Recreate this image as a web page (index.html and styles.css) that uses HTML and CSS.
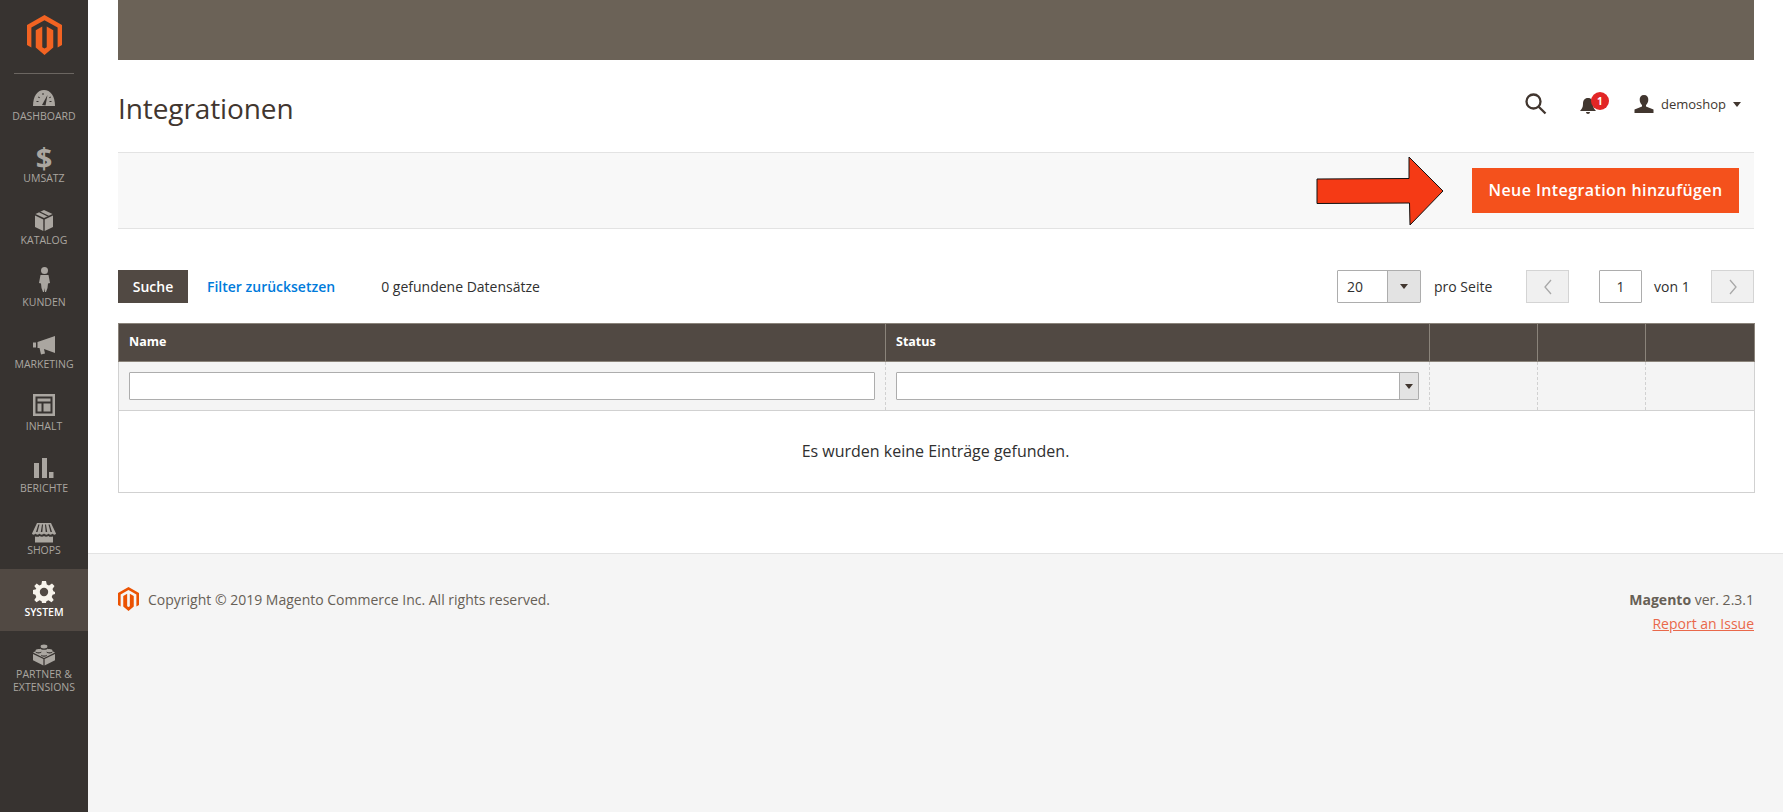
FILE: index.html
```html
<!DOCTYPE html>
<html lang="de">
<head>
<meta charset="utf-8">
<title>Integrationen</title>
<link rel="stylesheet" href="styles.css">
</head>
<body>
<div class="app">
  <nav class="sidebar">
    <div class="logo-wrap">
      <svg class="logo" viewBox="0 0 36 41"><path d="M18 0 36 10.300V30.800L31.500 33.400V12.900L18 5.200 4.500 12.900V33.400L0 30.800V10.300Z"/><path d="M9 15.500 15.700 11.700V33L18 34.300 20.300 33V11.700L27 15.500V33.400L18 41 9 33.400Z"/></svg>
    </div>
    <ul class="menu">
      <li class="item">
        <svg class="ico" viewBox="0 0 26 26"><path d="M2 23C2 13 6.500 7 13 7S24 13 24 23Z"/><path class="cut" d="M11 22 16.500 12 14.500 22.500Z"/><path class="cut" d="M5.500 18h2v1h-2zM7.500 13.500l1.500 1-.6.8-1.500-1zM11.500 10l1 0 0 2-1 0zM19.500 13.500l-1.500 1 .6.8 1.500-1zM18.500 18h2v1h-2z"/></svg>
        <span class="lbl">Dashboard</span>
      </li>
      <li class="item">
        <span class="ico glyph">$</span>
        <span class="lbl">Umsatz</span>
      </li>
      <li class="item">
        <svg class="ico" viewBox="0 0 26 26"><path d="M13 3 21.500 7 13 11 4.500 7Z"/><path d="M4 8.500 12.300 12.500V24L4 20Z"/><path d="M22 8.500 13.700 12.500V24L22 20Z"/><path class="cut" d="M8 5.200 9.200 4.600 17.800 8.800 16.600 9.400Z"/></svg>
        <span class="lbl">Katalog</span>
      </li>
      <li class="item">
        <svg class="ico" viewBox="0 0 26 26"><circle cx="13.500" cy="1.500" r="3.500"/><path d="M9.500 6H17.500L19 14 17 14.500 16.500 19 15 23H14L13.500 19 13 23H12L10.500 19 10 14.500 8 14Z"/></svg>
        <span class="lbl">Kunden</span>
      </li>
      <li class="item">
        <svg class="ico" viewBox="0 0 26 26"><path d="M2 11.500H5V16.500H2Z"/><path d="M6.500 11 24 5V22L13 18 14 22.500 10 23.500 8.500 17H6.500Z"/></svg>
        <span class="lbl">Marketing</span>
      </li>
      <li class="item">
        <svg class="ico" viewBox="0 0 26 26"><path fill-rule="evenodd" d="M2 1H24V23H2ZM4.500 3.500V20.500H21.500V3.500Z"/><path d="M6.500 5.500H19.500V8.500H6.500ZM6.500 10.500H10.500V18.500H6.500ZM12.500 10.500H19.500V18.500H12.500Z"/></svg>
        <span class="lbl">Inhalt</span>
      </li>
      <li class="item">
        <svg class="ico" viewBox="0 0 26 26"><path d="M3 8H8V23H3ZM11 3H16V23H11ZM18 17H22.500V23H18Z"/></svg>
        <span class="lbl">Berichte</span>
      </li>
      <li class="item">
        <svg class="ico" viewBox="0 0 26 26"><path d="M6 6H20L25 16.500C25 18 22 18 21.500 16.500 21 18 18 18 17.500 16.500 17 18 14 18 13 16.500 12 18 9 18 8.500 16.500 8 18 5 18 4.500 16.500 4 18 1 18 1 16.500Z"/><path d="M4 19.500C6 20 8 20 8.500 19 10 20 12 20 13 19 14 20 16 20 17.500 19 18 20 20 20 22 19.500V25.500H4Z"/><path class="cut" d="M7.300 7.500 8.500 7.500 6.500 15H5ZM11 7.500H12L11.300 15H9.800ZM14 7.500H15L16.200 15H14.700ZM17.500 7.500H18.700L21 15H19.500Z"/></svg>
        <span class="lbl">Shops</span>
      </li>
      <li class="item active">
        <svg class="ico" viewBox="0 0 26 26"><path fill-rule="evenodd" d="M11 2H15L15.800 5.600 18 6.500 21 4.500 23.500 7 21.500 10 22.400 12.200 24 13 24 15 21.600 15.800 20.700 18 22.700 21 20.500 23.200 17.500 21.300 15.400 22.200 15 24H11L10.600 22.200 8.500 21.300 5.500 23.200 3.300 21 5.300 18 4.400 15.800 2 15V11L5 10.300 5.300 9.800 3.300 7 5.700 4.500 8.300 6.400 10.400 5.500ZM13 8.800A4.200 4.200 0 1 0 13 17.200 4.200 4.200 0 1 0 13 8.800Z"/></svg>
        <span class="lbl">System</span>
      </li>
      <li class="item">
        <svg class="ico" viewBox="0 0 26 26"><path d="M13 6 24 11.500 13 17 2 11.500Z"/><path d="M2 12.900 12.400 18.100V24.500L2 19.300Z"/><path d="M24 12.900 13.600 18.100V24.500L24 19.300Z"/><ellipse class="cut" cx="13" cy="7.200" rx="3.400" ry="1.500"/><ellipse cx="13" cy="5.500" rx="3.400" ry="1.900"/><ellipse class="cut" cx="7.500" cy="11" rx="3" ry="1.400"/><ellipse cx="7.500" cy="9.700" rx="3" ry="1.600"/><ellipse class="cut" cx="18.500" cy="11" rx="3" ry="1.400"/><ellipse cx="18.500" cy="9.700" rx="3" ry="1.600"/><ellipse class="cut" cx="13" cy="14.300" rx="3" ry="1.400"/><ellipse cx="13" cy="13" rx="3" ry="1.600"/></svg>
        <span class="lbl">Partner &amp; Extensions</span>
      </li>
    </ul>
  </nav>

  <div class="main">
    <div class="content">
      <div class="banner"></div>
      <header class="page-head">
        <h1 class="title">Integrationen</h1>
        <div class="head-tools">
          <svg class="search" viewBox="0 0 22 22"><circle cx="8.500" cy="8.500" r="7"/><path d="M13.700 13.700 20.500 20.500"/></svg>
          <div class="bell-wrap">
            <svg class="bell" viewBox="0 0 18 18"><path d="M9 1C5.500 1 4 3.500 4 7 4 10.500 2.800 12 1 14H17C15.200 12 14 10.500 14 7 14 3.500 12.500 1 9 1Z"/><path d="M7 15H11C11 17.500 7 17.500 7 15Z"/></svg>
            <span class="badge">1</span>
          </div>
          <div class="user">
            <svg class="user-ico" viewBox="0 0 20 18"><path d="M10 0C13 0 14.500 2 14.300 5 14.200 7.500 13 9 12 10V11.500L19.500 14.500V18H.5V14.500L8 11.500V10C7 9 5.800 7.500 5.700 5 5.500 2 7 0 10 0Z"/></svg>
            <span class="user-name">demoshop</span>
            <span class="caret"></span>
          </div>
        </div>
      </header>

      <div class="action-bar">
        <svg class="arrow" viewBox="0 0 128 70"><path d="M1 23 93 22.500V1L127 35 94 69 93.500 47 1 47.500Z"/></svg>
        <button class="btn-primary" type="button">Neue Integration hinzufügen</button>
      </div>

      <div class="toolbar">
        <div class="tool-left">
          <button class="btn-search" type="button">Suche</button>
          <a class="link-reset" href="#">Filter zurücksetzen</a>
          <span class="count">0 gefundene Datensätze</span>
        </div>
        <div class="tool-right">
          <div class="per-page"><span class="pp-val">20</span><span class="pp-btn"><i class="tri"></i></span></div>
          <span class="pp-lbl">pro Seite</span>
          <button class="pg-btn pg-prev" type="button"><svg viewBox="0 0 10 16"><path d="M8 1 2 8 8 15"/></svg></button>
          <span class="pg-input">1</span>
          <span class="pg-of">von 1</span>
          <button class="pg-btn pg-next" type="button"><svg viewBox="0 0 10 16"><path d="M2 1 8 8 2 15"/></svg></button>
        </div>
      </div>

      <table class="grid">
        <colgroup><col class="c-name"><col class="c-status"><col class="c-x"><col class="c-x"><col class="c-last"></colgroup>
        <thead>
          <tr class="hrow"><th>Name</th><th>Status</th><th></th><th></th><th></th></tr>
          <tr class="frow">
            <td><div class="fld"></div></td>
            <td><div class="fld fld-sel"><span class="sel-btn"><i class="tri"></i></span></div></td>
            <td></td><td></td><td></td>
          </tr>
        </thead>
        <tbody>
          <tr class="erow"><td colspan="5">Es wurden keine Einträge gefunden.</td></tr>
        </tbody>
      </table>
    </div>

    <footer class="footer">
      <div class="foot-left">
        <svg class="foot-logo" viewBox="0 0 36 41"><path d="M18 0 36 10.300V30.800L31.500 33.400V12.900L18 5.200 4.500 12.900V33.400L0 30.800V10.300Z"/><path d="M9 15.500 15.700 11.700V33L18 34.300 20.300 33V11.700L27 15.500V33.400L18 41 9 33.400Z"/></svg>
        <span>Copyright © 2019 Magento Commerce Inc. All rights reserved.</span>
      </div>
      <div class="foot-right">
        <div class="ver"><b>Magento</b> ver. 2.3.1</div>
        <a class="issue" href="#">Report an Issue</a>
      </div>
    </footer>
  </div>
</div>
</body>
</html>
```

FILE: styles.css
```css
* { box-sizing: border-box; }
html, body { margin: 0; height: 100%; }
body { font-family: "Open Sans", "Noto Sans", sans-serif; font-size: 14px; color: #303030; background: #fff; overflow: hidden; }
.app { display: flex; height: 812px; }

.sidebar { width: 88px; flex: none; background: #373330; }
.logo-wrap { height: 74px; margin: 0 14px -1px; padding-top: 15px; display: flex; justify-content: center; align-items: flex-start; border-bottom: 1px solid #6b6661; }
.logo { width: 35px; height: 40px; fill: #f26322; fill-rule: evenodd; }
.menu { list-style: none; margin: 0; padding: 0; }
.item { height: 62px; padding-top: 10px; display: flex; flex-direction: column; align-items: center; color: #aaa6a0; fill: #aaa6a0; }
.item .cut { fill: #373330; }
.ico { width: 26px; height: 26px; flex: none; overflow: visible; }
.glyph { font-size: 29px; font-weight: 700; line-height: 26px; text-align: center; }
.lbl { font-size: 10.500px; line-height: 13px; margin-top: 1px; text-transform: uppercase; text-align: center; width: 76px; }
.item.active { background: #514943; color: #fff; fill: #f7f3eb; }
.item.active .lbl { font-weight: 600; }

.main { flex: 1; min-width: 0; display: flex; flex-direction: column; }
.content { padding: 0 29px 0 30px; }
.banner { height: 60px; background: #6b6257; }
.page-head { height: 92px; display: flex; justify-content: space-between; align-items: center; }
.title { margin: 3px 0 0; font-size: 28px; font-weight: 400; line-height: 36px; letter-spacing: -.1px; color: #41362f; }
.head-tools { display: flex; align-items: center; height: 30px; margin-top: -4px; padding-right: 13px; }
.search { width: 22px; height: 22px; fill: none; stroke: #41362f; stroke-width: 2.300; margin-right: 32px; }
.bell-wrap { position: relative; width: 18px; height: 18px; margin-top: 4px; margin-right: 37px; }
.bell { width: 18px; height: 18px; fill: #41362f; display: block; }
.badge { position: absolute; left: 12px; top: -5px; width: 18px; height: 18px; border-radius: 50%; background: #e22626; color: #fff; font-size: 10px; font-weight: 700; line-height: 18px; text-align: center; }
.user { display: flex; align-items: center; }
.user-ico { width: 20px; height: 18px; fill: #41362f; margin-right: 7px; }
.user-name { font-size: 13px; color: #41362f; }
.caret { width: 0; height: 0; margin-left: 7px; border: 4px solid transparent; border-top: 5px solid #41362f; border-bottom: 0; }

.action-bar { height: 77px; background: #f8f8f8; border-top: 1px solid #e3e3e3; border-bottom: 1px solid #e3e3e3; display: flex; justify-content: flex-end; align-items: center; padding-right: 15px; gap: 28px; }
.arrow { width: 128px; height: 70px; fill: #f53a15; stroke: #111; stroke-width: 1; flex: none; overflow: visible; }
.btn-primary { width: 267px; height: 45px; border: 0; background: #f4511c; color: #fff; font: 600 16px "Open Sans", sans-serif; letter-spacing: .42px; padding: 0 0 2px; }

.toolbar { margin-top: 41px; height: 33px; display: flex; justify-content: space-between; align-items: center; }
.tool-left, .tool-right { display: flex; align-items: center; }
.btn-search { width: 70px; height: 33px; border: 0; background: #514943; color: #fff; font: 600 14px "Open Sans", sans-serif; padding: 0; }
.link-reset { margin-left: 19px; color: #007bdb; font-weight: 600; text-decoration: none; }
.count { margin-left: 46px; }
.per-page { width: 84px; height: 33px; border: 1px solid #adadad; border-radius: 1px; display: flex; background: #fff; }
.pp-val { flex: 1; padding-left: 9px; line-height: 31px; }
.pp-btn { width: 33px; background: #e3e3e3; border-left: 1px solid #adadad; display: flex; align-items: center; justify-content: center; }
.tri { display: block; width: 0; height: 0; border: 4px solid transparent; border-top: 5px solid #41362f; border-bottom: 0; }
.pp-lbl { margin-left: 13px; width: 92px; }
.pg-btn { width: 43px; height: 33px; border: 1px solid #d4d4d4; background: #f0f0f0; padding: 0; display: flex; align-items: center; justify-content: center; }
.pg-btn svg { width: 10px; height: 16px; fill: none; stroke: #a8a8a8; stroke-width: 1.300; }
.pg-input { width: 43px; height: 33px; margin-left: 30px; border: 1px solid #adadad; border-radius: 1px; text-align: center; line-height: 31px; }
.pg-of { margin-left: 12px; width: 57px; }

.grid { width: 1636px; margin-top: 20px; border-collapse: collapse; table-layout: fixed; border: 1px solid #d1d1d1; }
.c-name { width: 767px; }
.c-status { width: 544px; }
.c-x { width: 108px; }
.c-last { width: 109px; }
.hrow th { height: 38px; padding: 0 10px 2px; background: #514943; color: #fff; font-size: 12.500px; font-weight: 700; text-align: left; border: 1px solid #8a837a; }
.frow td { height: 49px; padding: 0 10px; background: #f4f4f4; border-left: 1px dashed #d1d1d1; border-right: 1px dashed #d1d1d1; border-bottom: 1px solid #d1d1d1; }
.fld { height: 28px; background: #fff; border: 1px solid #adadad; border-radius: 1px; display: flex; justify-content: flex-end; }
.sel-btn { width: 19px; background: #e3e3e3; border-left: 1px solid #adadad; display: flex; align-items: center; justify-content: center; }
.erow td { height: 82px; padding: 0 2px 2px 0; text-align: center; font-size: 16px; color: #303030; background: #fff; }

.footer { flex: 1; margin-top: 60px; padding: 34px 29px 0 30px; background: #f5f5f5; border-top: 1px solid #e3e3e3; display: flex; justify-content: space-between; align-items: flex-start; color: #676056; }
.foot-left { display: flex; align-items: center; gap: 9px; margin-top: -1px; }
.foot-logo { width: 21px; height: 24px; fill: #eb5202; fill-rule: evenodd; }
.foot-right { text-align: right; line-height: 24px; }
.ver b { font-weight: 700; }
.issue { color: #e9684a; }
```
